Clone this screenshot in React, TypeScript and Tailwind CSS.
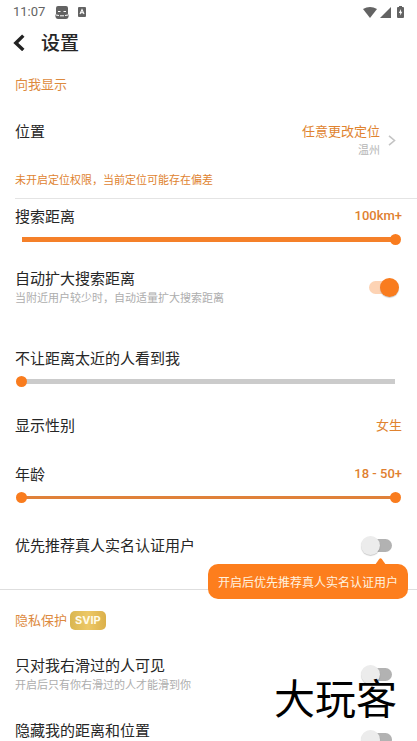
import React, { useState } from 'react';

interface SwitchProps {
  id: string;
  checked: boolean;
  onChange: (checked: boolean) => void;
}

interface SettingRowProps {
  id: string;
  title: string;
  hint?: string;
  className: string;
  checked: boolean;
  onChange: (checked: boolean) => void;
}

interface SliderProps {
  label: string;
  value: number;
  min?: number;
  max?: number;
  onChange: (value: number) => void;
}

const thumbStyle =
  'col-start-1 row-start-1 m-0 h-[11px] w-full appearance-none bg-transparent outline-none [&::-webkit-slider-thumb]:pointer-events-auto [&::-webkit-slider-thumb]:size-[11px] [&::-webkit-slider-thumb]:appearance-none [&::-webkit-slider-thumb]:rounded-full [&::-webkit-slider-thumb]:bg-[#f97c1e]';

const Slider: React.FC<SliderProps> = ({ label, value, min = 0, max = 100, onChange }) => {
  const percent = ((value - min) / (max - min)) * 100;

  return (
    <div className="mx-4 mt-2 grid items-center">
      <div className="col-start-1 row-start-1 mx-[6px] h-[5px] bg-[#cbcbcb]">
        <div className="h-full bg-[#f58029]" style={{ width: `${percent}%` }} />
      </div>
      <input
        type="range"
        aria-label={label}
        min={min}
        max={max}
        value={value}
        onChange={(e) => onChange(Number(e.target.value))}
        className={thumbStyle}
      />
    </div>
  );
};

const Switch: React.FC<SwitchProps> = ({ id, checked, onChange }) => (
  <input
    id={id}
    type="checkbox"
    role="switch"
    checked={checked}
    onChange={(e) => onChange(e.target.checked)}
    className="relative h-[13px] w-7 shrink-0 appearance-none rounded-full bg-[#b2b2b2] before:absolute before:-top-[3px] before:-left-[3px] before:size-[19px] before:rounded-full before:bg-[#ececec] before:shadow-[0_1px_1px_rgba(0,0,0,0.2)] checked:bg-[#fdd3b4] checked:before:left-[11px] checked:before:bg-[#f97c1e]"
  />
);

const SettingRow: React.FC<SettingRowProps> = ({ id, title, hint, className, checked, onChange }) => (
  <div className={`flex items-center justify-between pl-[15px] ${className}`}>
    <label htmlFor={id} className="min-h-[39px]">
      <span className="block text-[15px] leading-5">{title}</span>
      {hint && <span className="block text-[11px] leading-[18px] text-[#adadad]">{hint}</span>}
    </label>
    <Switch id={id} checked={checked} onChange={onChange} />
  </div>
);

const StatusBar: React.FC = () => (
  <div className="flex h-6 items-center px-[13px] text-[#636363]">
    <span className="font-[Roboto] text-[13px] leading-6">11:07</span>
    <svg className="ml-[10px] h-[13px] w-[14px]" viewBox="0 0 14 13">
      <path d="M1 2Q1 0 3 0H11Q13 0 13 2V8Q14 9 13.5 11Q13 13 11 13H3Q1 13 .5 11Q0 9 1 8Z" fill="currentColor" />
      <path d="M3 5.5h2.5M8.5 5.5H11M1 9l3 .5M13 9l-3 .5M5 9.5q1 1.2 2 0q1 1.2 2 0" fill="none" stroke="#fff" strokeWidth="1" />
    </svg>
    <svg className="ml-[9px] h-[10px] w-2" viewBox="0 0 8 10">
      <rect width="8" height="10" rx="1" fill="currentColor" />
      <path d="M2 7l2-4.5L6 7M2.8 5.7h2.4" fill="none" stroke="#fff" strokeWidth="1.1" />
    </svg>
    <svg className="ml-auto h-[11px] w-[14px]" viewBox="0 0 14 11">
      <path d="M0 2Q7-2 14 2L7 11Z" fill="currentColor" />
    </svg>
    <svg className="ml-[3px] h-[11px] w-[11px]" viewBox="0 0 11 11">
      <path d="M11 0V11H0Z" fill="currentColor" />
    </svg>
    <svg className="ml-[6px] h-[12px] w-[7px]" viewBox="0 0 7 12">
      <path d="M2 0H5V1H6Q7 1 7 2V11Q7 12 6 12H1Q0 12 0 11V2Q0 1 1 1H2Z" fill="currentColor" />
      <path d="M4 3L1.8 7H3.2V9.5L5.3 5.8H4Z" fill="#fff" />
    </svg>
  </div>
);

const App: React.FC = () => {
  const [distance, setDistance] = useState(100);
  const [hideDistance, setHideDistance] = useState(0);
  const [minAge, setMinAge] = useState(18);
  const [maxAge, setMaxAge] = useState(50);
  const [autoExpand, setAutoExpand] = useState(true);
  const [verifiedFirst, setVerifiedFirst] = useState(false);
  const [onlyLiked, setOnlyLiked] = useState(false);
  const [hideLocation, setHideLocation] = useState(false);

  const ageStart = ((minAge - 18) / 32) * 100;
  const ageWidth = ((maxAge - minAge) / 32) * 100;

  return (
    <main className="relative h-screen overflow-hidden bg-white font-['Noto_Sans_CJK_SC',sans-serif] text-[#262626]">
      <StatusBar />

      <header className="flex h-9 items-center pl-[13px]">
        <button type="button" aria-label="返回" className="text-[#222]">
          <svg className="h-[17px] w-3" viewBox="0 0 12 17" fill="none" stroke="currentColor" strokeWidth="3.4">
            <path d="M10.3 1.6L2.8 9l7.5 7" />
          </svg>
        </button>
        <h1 className="ml-4 text-[19px] leading-6 font-medium">设置</h1>
      </header>

      <section>
        <h2 className="px-[15px] pt-[14px] text-[13px] leading-5 text-[#dd8a3e]">向我显示</h2>

        <div className="mt-7 flex items-center pr-[21px] pl-[15px]">
          <span className="self-start text-[15px] leading-[18px]">位置</span>
          <button type="button" className="ml-auto flex items-center text-right">
            <span>
              <span className="block text-[13px] leading-[18px] text-[#e0832f]">任意更改定位</span>
              <span className="block text-[11px] leading-[18px] text-[#b5b5b5]">温州</span>
            </span>
            <svg className="ml-2 h-[11px] w-2" viewBox="0 0 8 11" fill="none" stroke="#c4c4c4" strokeWidth="1.6">
              <path d="M1 .8L6.5 5.5L1 10.2" />
            </svg>
          </button>
        </div>
        <p className="mt-3 px-[15px] text-[11px] leading-[18px] text-[#e0832f]">
          未开启定位权限，当前定位可能存在偏差
        </p>

        <hr className="mt-[10px] ml-[15px] border-[#e4e4e4]" />

        <div className="mt-[7px] flex items-center justify-between px-[15px] leading-5">
          <span className="text-[15px]">搜索距离</span>
          <span className="font-[Roboto] text-[13px] font-medium text-[#e07f30]">{distance}km+</span>
        </div>
        <Slider label="搜索距离" value={distance} onChange={setDistance} />

        <SettingRow
          id="auto-expand"
          title="自动扩大搜索距离"
          hint="当附近用户较少时，自动适量扩大搜索距离"
          className="mt-[23px] pr-5"
          checked={autoExpand}
          onChange={setAutoExpand}
        />

        <div className="mt-[41px] px-[15px] text-[15px] leading-5">不让距离太近的人看到我</div>
        <Slider label="不让距离太近的人看到我" value={hideDistance} onChange={setHideDistance} />

        <div className="mt-7 flex items-center justify-between px-[15px] leading-5">
          <span className="text-[15px]">显示性别</span>
          <button type="button" className="text-[13px] text-[#e0832f]">女生</button>
        </div>

        <div className="mt-[29px] flex items-center justify-between px-[15px] leading-5">
          <span className="text-[15px]">年龄</span>
          <span className="font-[Roboto] text-[13px] font-medium text-[#e07f30]">
            {minAge} - {maxAge}+
          </span>
        </div>
        <div className="mx-4 mt-2 grid items-center">
          <div className="col-start-1 row-start-1 mx-[6px] h-[3px] bg-[#cbcbcb]">
            <div className="h-full bg-[#e0813a]" style={{ marginLeft: `${ageStart}%`, width: `${ageWidth}%` }} />
          </div>
          <input
            type="range"
            aria-label="最小年龄"
            min={18}
            max={50}
            value={minAge}
            onChange={(e) => setMinAge(Math.min(Number(e.target.value), maxAge))}
            className={`pointer-events-none ${thumbStyle}`}
          />
          <input
            type="range"
            aria-label="最大年龄"
            min={18}
            max={50}
            value={maxAge}
            onChange={(e) => setMaxAge(Math.max(Number(e.target.value), minAge))}
            className={`pointer-events-none ${thumbStyle}`}
          />
        </div>

        <div className="relative mt-8 flex items-center justify-between pr-[25px] pl-[15px]">
          <label htmlFor="verified-first" className="text-[15px] leading-5">优先推荐真人实名认证用户</label>
          <Switch id="verified-first" checked={verifiedFirst} onChange={setVerifiedFirst} />
          <div role="tooltip" className="absolute top-[29px] right-[9px] z-10 rounded-[10px] bg-[#fd7e1d] px-[10px] py-2 text-[12px] leading-[19px] text-[#fff3e0]">
            开启后优先推荐真人实名认证用户
            <svg className="absolute -top-[6px] right-[22px] h-[7px] w-[11px]" viewBox="0 0 11 7">
              <path d="M0 7L4.2 1Q5.5-.6 6.8 1L11 7Z" fill="#fd7e1d" />
            </svg>
          </div>
        </div>
      </section>

      <section className="mt-[34px] border-t border-[#dedede] pt-5">
        <h2 className="flex items-center px-[15px] text-[13px] leading-5 text-[#dd8a3e]">
          隐私保护
          <span className="ml-[3px] rounded-[5px] bg-linear-to-r from-[#d9b650] via-[#edc866] to-[#dbb04a] px-[5px] font-[Inter] text-[11px] leading-[19px] font-bold text-[#fffbe9]">
            SVIP
          </span>
        </h2>

        <SettingRow
          id="only-liked"
          title="只对我右滑过的人可见"
          hint="开启后只有你右滑过的人才能滑到你"
          className="mt-[25px] pr-[25px]"
          checked={onlyLiked}
          onChange={setOnlyLiked}
        />
        <SettingRow
          id="hide-location"
          title="隐藏我的距离和位置"
          className="mt-[26px] pr-[25px]"
          checked={hideLocation}
          onChange={setHideLocation}
        />
      </section>

      <div className="pointer-events-none absolute right-5 bottom-[25px] text-[41px] leading-10 text-black">
        大玩客
      </div>
    </main>
  );
};

export default App;
